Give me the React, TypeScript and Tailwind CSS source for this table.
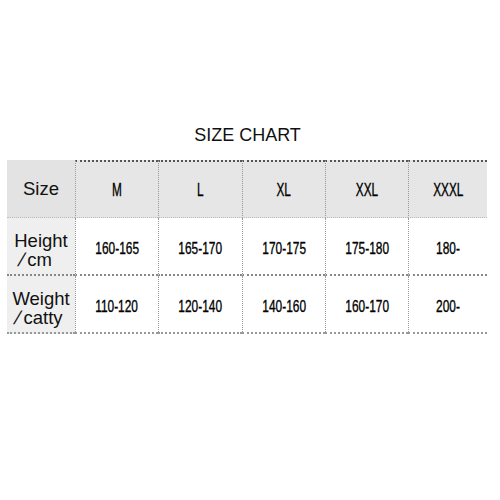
import React from "react";

const sizes = ["M", "L", "XL", "XXL", "XXXL"];

const rows = [
  { label: "Height", unit: "cm", unitPad: "pr-[13px]", values: ["160-165", "165-170", "170-175", "175-180", "180-"] },
  { label: "Weight", unit: "catty", unitPad: "pr-[6px]", values: ["110-120", "120-140", "140-160", "160-170", "200-"] },
];

function Narrow({ children, head }: { children: React.ReactNode; head?: boolean }) {
  // the chart uses a condensed face, squeeze Arial-width text instead
  return (
    <span
      className={
        head
          ? "inline-block scale-x-[0.62] text-[19px] leading-[20px] text-black [-webkit-text-stroke:0.35px_black]"
          : "inline-block scale-x-[0.7] text-[17px] leading-[20px] text-black [-webkit-text-stroke:0.35px_black]"
      }
    >
      {children}
    </span>
  );
}

export default function App() {
  return (
    <div
      className="w-[500px] h-[500px] bg-white"
      style={{ fontFamily: '"Liberation Sans", Arial, sans-serif' }}
    >
      <div className="pt-[125px] pb-[15px] pr-[5px] text-center text-[18px] leading-[20px] text-[#111]">
        SIZE CHART
      </div>

      <div className="ml-[7px] w-[480px] grid grid-cols-[68px_83px_84px_83px_83px_79px]">
        {/* Header row */}
        <div className="h-[58px] flex items-center justify-center bg-[#e3e3e3] border-b border-dotted border-b-[#bbb] text-[18.5px] text-[#111]">
          Size
        </div>
        {sizes.map((s) => (
          <div
            key={s}
            className="h-[58px] flex items-center justify-center bg-[#e6e6e6] border-t-2 border-l border-b border-dotted border-t-[#555] border-l-[#999] border-b-[#bbb]"
          >
            <Narrow head>{s}</Narrow>
          </div>
        ))}

        {/* Body rows */}
        {rows.map((row, i) => {
          const bottom = i === 0 ? "border-b-2 border-b-[#888]" : "border-b-2 border-b-[#999]";
          return (
            <React.Fragment key={row.label}>
              <div className={`h-[58px] flex flex-col items-center justify-center pt-[7px] bg-[#efefef] border-dotted ${bottom} text-[18.5px] leading-[19px] text-[#111]`}>
                <div>{row.label}</div>
                <div className={row.unitPad}>
                  <span className="inline-block ml-[2px] mr-[3px] -skew-x-[18deg]">/</span>
                  {row.unit}
                </div>
              </div>
              {row.values.map((v, j) => (
                <div
                  key={j}
                  className={`h-[58px] flex items-center justify-center pt-[5px] bg-white border-l border-dotted border-l-[#999] ${bottom}`}
                >
                  <Narrow>{v}</Narrow>
                </div>
              ))}
            </React.Fragment>
          );
        })}
      </div>
    </div>
  );
}
